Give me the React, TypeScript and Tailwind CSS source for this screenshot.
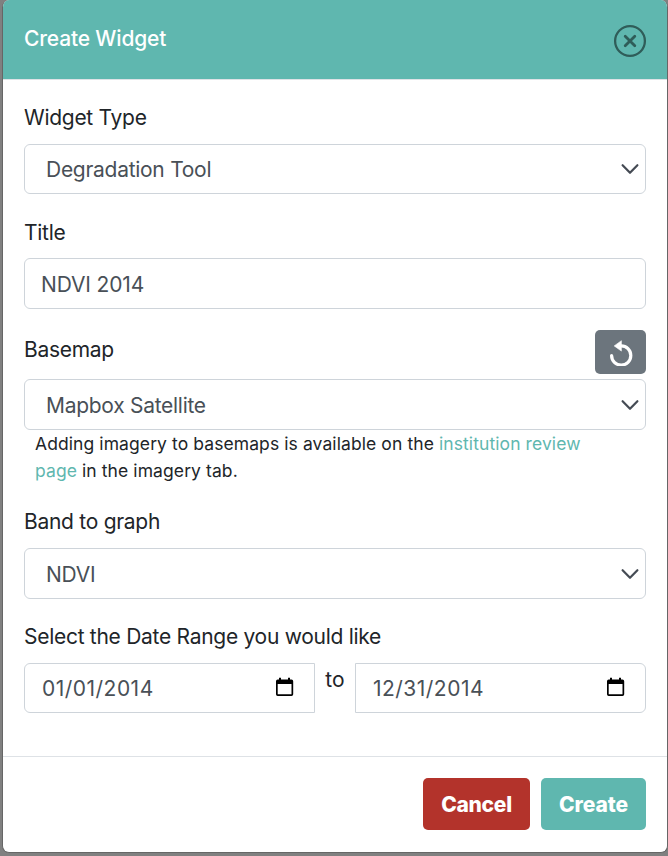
import type { ReactNode } from "react";

function Label({ children, className = "" }: { children: ReactNode; className?: string }) {
  return (
    <label className={`block h-8 whitespace-nowrap text-[21px] leading-8 tracking-[-0.28px] text-[#212529] ${className}`}>
      {children}
    </label>
  );
}

function SelectBox({ value, className = "" }: { value: string; className?: string }) {
  return (
    <div
      className={`flex items-center justify-between rounded-[6px] border border-[#ced4da] bg-white pr-[6px] pl-[21px] text-[21px] tracking-[-0.28px] text-[#495057] ${className}`}
    >
      <span className="pt-[2px] whitespace-nowrap">{value}</span>
      <svg width="18" height="12" viewBox="0 0 18 12" fill="none" stroke="#454b54" strokeWidth="2.2" strokeLinecap="round" strokeLinejoin="round">
        <path d="M1.6 2.200 9 9.800 16.400 2.200" />
      </svg>
    </div>
  );
}

function DateBox({ value, className = "" }: { value: string; className?: string }) {
  return (
    <div
      className={`flex h-[50px] w-[291px] items-center justify-between border border-[#ced4da] bg-white pr-5 pl-[17px] text-[21px] tracking-[0.48px] text-[#495057] ${className}`}
    >
      <span className="pt-[2px] whitespace-nowrap">{value}</span>
      <svg width="19" height="20" viewBox="0 0 19 20" className="mb-[3px]">
        <path
          fill="#000"
          fillRule="evenodd"
          d="M4 .8h2V2.500h7V.8h2V2.500h1.500a1.700 1.700 0 0 1 1.700 1.700v13.100a1.700 1.700 0 0 1-1.700 1.700H2.700A1.700 1.700 0 0 1 1 17.300V4.200a1.700 1.700 0 0 1 1.700-1.700H4ZM2.700 7v10.300h13.800V7Z"
        />
      </svg>
    </div>
  );
}

export default function App() {
  return (
    <div className="h-[856px] w-[668px] overflow-hidden bg-[#808080] pl-[2px] font-['Inter',sans-serif]">
      <div className="flex h-[853px] w-[666px] flex-col overflow-hidden rounded-[7px] border-x border-b border-[#666] bg-white">
        <header className="flex h-[80px] shrink-0 items-start justify-between border-b border-[#dee2e6] bg-[#5fb7af] pr-[20px] pl-[21px]">
          <h5 className="mt-[23px] text-[21px] leading-8 font-medium tracking-[-0.16px] whitespace-nowrap text-white">
            Create Widget
          </h5>
          <svg width="34" height="34" viewBox="0 0 34 34" fill="none" stroke="#2f5d59" className="mt-6">
            <circle cx="17" cy="17" r="14.900" strokeWidth="2.300" />
            <path d="m12.200 12.200 9.600 9.600m0-9.600-9.600 9.600" strokeWidth="2.800" strokeLinecap="round" />
          </svg>
        </header>

        <main className="flex h-[676px] shrink-0 flex-col pt-[22px] pr-[21px] pl-[21px]">
          <Label>Widget Type</Label>
          <SelectBox value="Degradation Tool" className="mt-[10px] h-[50px]" />

          <Label className="mt-[23px]">Title</Label>
          <div className="mt-[9px] flex h-[51px] items-center rounded-[6px] border border-[#ced4da] pl-4 text-[21px] tracking-[-0.15px] text-[#495057]">
            <span className="pt-[2px] whitespace-nowrap">NDVI 2014</span>
          </div>

          <div className="mt-[21px] flex h-11 justify-between">
            <Label className="mt-1">Basemap</Label>
            <button className="flex h-11 w-[51px] items-center justify-center rounded-[5px] bg-[#6c757d]">
              <svg width="26" height="28" viewBox="0 0 26 28" fill="none">
                <path d="M3.600 17.500A9.600 9.600 0 1 0 13.200 7.900h-2" stroke="#fff" strokeWidth="3.200" strokeLinecap="round" />
                <path d="M13.400 2.700v10.400L6.200 7.900Z" fill="#fff" stroke="#fff" strokeWidth="0.600" strokeLinejoin="round" />
              </svg>
            </button>
          </div>
          <SelectBox value="Mapbox Satellite" className="mt-[5px] h-[51px]" />
          <p className="ml-[11px] h-[54px] text-[17.5px] leading-[27px] tracking-[0.09px] whitespace-nowrap text-[#212529]">
            Adding imagery to basemaps is available on the <a className="text-[#5fb7af]">institution review</a>
            <br />
            <a className="text-[#5fb7af]">page</a> in the imagery tab.
          </p>

          <Label className="mt-[22px]">Band to graph</Label>
          <SelectBox value="NDVI" className="mt-[10px] h-[51px]" />

          <Label className="mt-[22px]">Select the Date Range you would like</Label>
          <div className="mt-[10px] flex justify-between">
            <DateBox value="01/01/2014" className="rounded-l-[6px]" />
            <span className="pt-px text-[21px] leading-8 text-[#212529]">to</span>
            <DateBox value="12/31/2014" className="rounded-r-[6px]" />
          </div>
        </main>

        <footer className="flex grow items-start justify-end gap-[11px] border-t border-[#dee2e6] pt-[21px] pr-[21px]">
          <button className="h-[52px] w-[107px] rounded-[5px] bg-[#b3332b] pt-[2px] text-[21px] font-extrabold tracking-[-0.3px] text-white">
            Cancel
          </button>
          <button className="h-[52px] w-[105px] rounded-[5px] bg-[#5fb7af] pt-[2px] text-[21px] font-extrabold tracking-[-0.1px] text-white">
            Create
          </button>
        </footer>
      </div>
    </div>
  );
}
